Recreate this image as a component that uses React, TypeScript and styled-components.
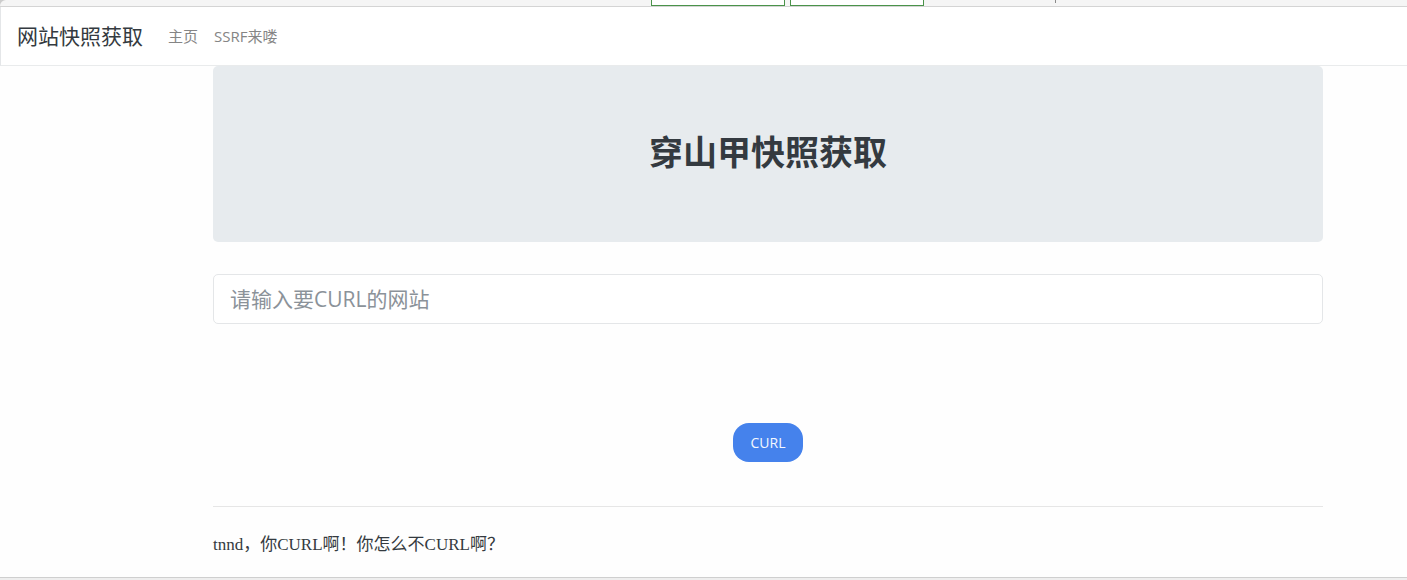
import React from "react";
import styled, { createGlobalStyle } from "styled-components";

const sans = `"Open Sans", "Noto Sans CJK SC", sans-serif`;

const GlobalStyle = createGlobalStyle`
  *, *::before, *::after { box-sizing: border-box; }
  body { margin: 0; background: #fefefe; color: #343a40; font-family: ${sans}; font-size: 15px; line-height: 24px; }
`;

const TopStrip = styled.div`
  display: flex;
  gap: 5px;
  height: 7px;
  padding-left: 651px;
  background: #f5f5f5;
  border-bottom: 1px solid #d4d4d4;
  border-top-left-radius: 6px;
`;

const TopFrame = styled.div`
  background: #cccccc;
`;

const StripTab = styled.div`
  width: 134px;
  background: #ffffff;
  border: 1px solid #4a934a;
  border-top: 0;
`;

const StripTick = styled.div`
  width: 1px;
  height: 3px;
  margin-left: 126px;
  background: #8a8a8a;
`;

const Navbar = styled.nav`
  display: flex;
  align-items: center;
  height: 59px;
  padding: 0 16px;
  background: #ffffff;
  border-left: 1px solid #e4e6e8;
  border-bottom: 1px solid #e9ebec;
`;

const Brand = styled.a`
  margin-right: 25px;
  color: #343a40;
  font-size: 21px;
  line-height: 32px;
  text-decoration: none;
`;

const NavLinks = styled.div`
  display: flex;
  gap: 16px;
`;

const NavLink = styled.a`
  color: #858585;
  text-decoration: none;
`;

const Main = styled.main`
  display: flex;
  flex-direction: column;
  padding: 0 84px 0 213px;
`;

const Banner = styled.header`
  padding: 62px 32px 66px;
  border-radius: 5px;
  background: #e7ebee;
  text-align: center;
`;

const Title = styled.h1`
  margin: 0;
  color: #343a40;
  font-size: 34px;
  font-weight: 700;
  line-height: 48px;
`;

const Form = styled.form`
  display: flex;
  flex-direction: column;
  align-items: center;
  gap: 99px;
  padding: 32px 0 44px;
`;

const UrlInput = styled.input`
  width: 100%;
  height: 50px;
  padding: 8px 16px;
  border: 1px solid #e4e6e8;
  border-radius: 5px;
  background: #ffffff;
  color: #343a40;
  font-family: ${sans};
  font-size: 21px;
  line-height: 32px;
  &::placeholder { color: #8b9299; opacity: 1; }
`;

const SubmitButton = styled.button`
  padding: 7px 18px;
  border: 0;
  border-radius: 16px;
  background: #4582ec;
  color: #f4f8ff;
  font-family: ${sans};
  font-size: 14px;
  line-height: 25px;
  cursor: pointer;
`;

const Divider = styled.hr`
  width: 100%;
  margin: 0;
  border: 0;
  border-top: 1px solid #e6e6e6;
`;

const Message = styled.p`
  margin: 25px 0 19px;
  font-family: "Liberation Serif", "Noto Sans CJK SC", serif;
  font-size: 17px;
  line-height: 26px;
`;

const BottomEdge = styled.footer`
  height: 3px;
  background: #eeeeee;
  border-top: 1px solid #cfcfcf;
`;

export default function App() {
  return (
    <>
      <GlobalStyle />
      <TopFrame>
        <TopStrip>
          <StripTab />
          <StripTab />
          <StripTick />
        </TopStrip>
      </TopFrame>
      <Navbar>
        <Brand href="#">网站快照获取</Brand>
        <NavLinks>
          <NavLink href="#home">主页</NavLink>
          <NavLink href="#ssrf">SSRF来喽</NavLink>
        </NavLinks>
      </Navbar>
      <Main>
        <Banner>
          <Title>穿山甲快照获取</Title>
        </Banner>
        <Form onSubmit={(event) => event.preventDefault()}>
          <UrlInput type="text" name="url" aria-label="请输入要CURL的网站" placeholder="请输入要CURL的网站" />
          <SubmitButton type="submit">CURL</SubmitButton>
        </Form>
        <Divider />
        <Message>tnnd，你CURL啊！你怎么不CURL啊？</Message>
      </Main>
      <BottomEdge />
    </>
  );
}
